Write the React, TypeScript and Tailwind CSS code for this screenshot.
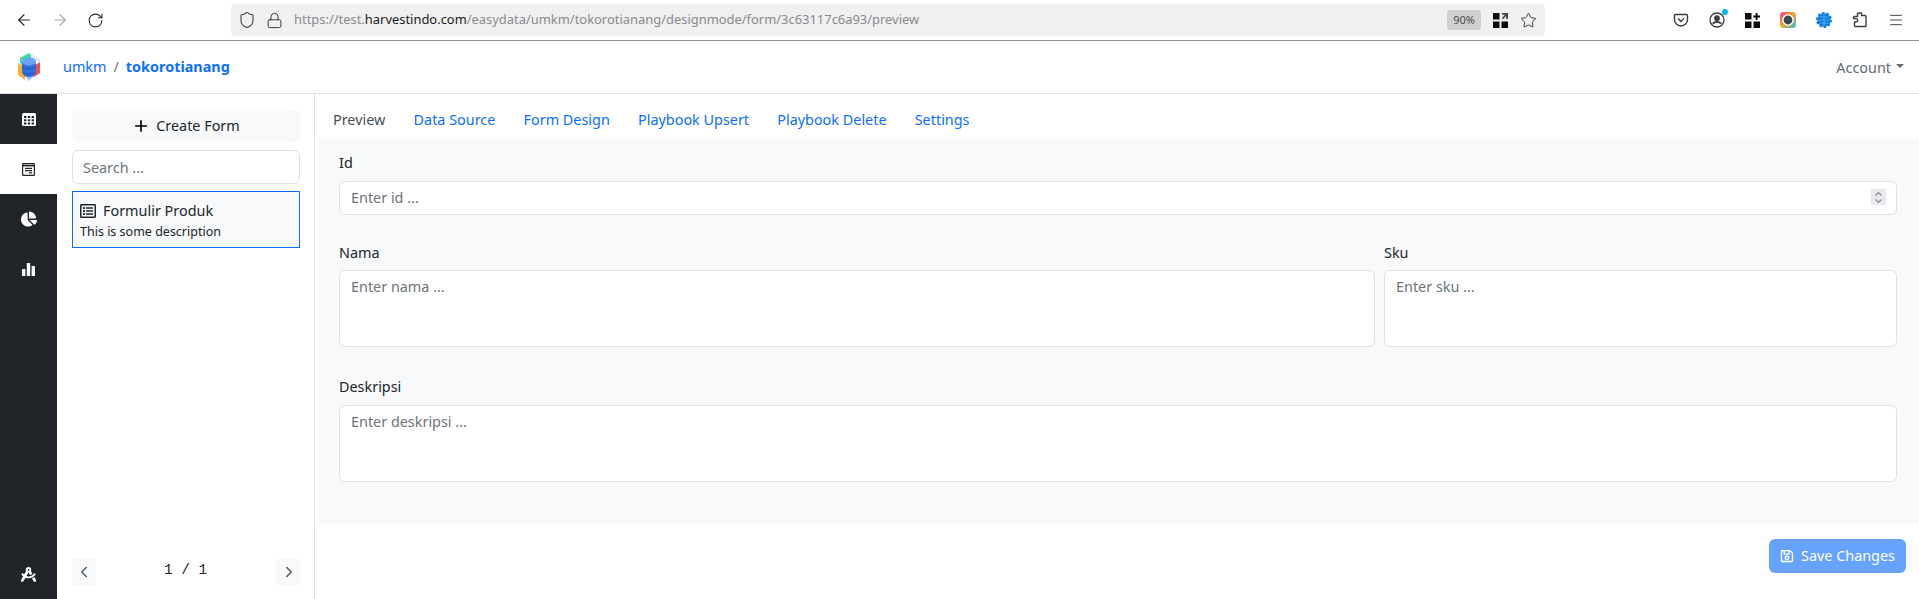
import React from "react";
import { FaChartPie, FaDraftingCompass, FaRegListAlt, FaRegSave } from "react-icons/fa";
import { ArrowLeft, ArrowRight, RotateCw, Shield, Lock, Star, Menu, Plus, ChevronLeft, ChevronRight } from "lucide-react";

const F = "font-['Noto_Sans',sans-serif]";

function Logo() {
  return (
    <svg width="26" height="30" viewBox="0 0 26 30">
      <polygon points="4,6 13,1 15,3 15,8 6,13 4,11" fill="#3ddc97" />
      <polygon points="15,2 24,7 24,11 15,6" fill="#dfe7f5" />
      <polygon points="18,14 24,10 24,21 18,25" fill="#ef5350" />
      <polygon points="2,11 9,15 9,28 2,23" fill="#f9b233" />
      <polygon points="9,24 18,24 13,29" fill="#a9c4ef" />
      <rect x="6" y="6" width="14" height="19" rx="6" fill="#2f6fe0" />
      <ellipse cx="13" cy="9.5" rx="7" ry="4" fill="#6ea2f5" />
      <path d="M6 15c2 2.6 12 2.6 14 0M6 20c2 2.6 12 2.6 14 0" stroke="#1f56b8" strokeWidth="1" fill="none" />
    </svg>
  );
}

function QrAdd({ arrow }: { arrow?: boolean }) {
  return (
    <svg width="15" height="15" viewBox="0 0 15 15" fill="#0c0c0d">
      <rect x="0" y="0" width="6.5" height="6.5" />
      <rect x="0" y="8.5" width="6.5" height="6.5" />
      <rect x="8.5" y="8.5" width="6.5" height="6.5" />
      {arrow ? (
        <path d="M9 0h6v6h-1.8V3L10 6.2 8.8 5 12 1.8H9z" fill="#444" />
      ) : (
        <path d="M10.7 0h1.8v2.6H15v1.8h-2.5V7h-1.8V4.4H8.3V2.6h2.4z" />
      )}
    </svg>
  );
}

function Browser() {
  return (
    <div className="flex h-[41px] shrink-0 items-center border-b border-[#8f8f8f] bg-white">
      <div className="flex w-[231px] shrink-0 items-center gap-[18px] pl-[15px] text-[#2b2a33]">
        <ArrowLeft size={18} strokeWidth={1.5} />
        <ArrowRight size={18} strokeWidth={1.5} className="text-[#a9a9ad]" />
        <RotateCw size={17} strokeWidth={1.5} />
      </div>
      <div className="flex h-8 w-[1314px] shrink-0 items-center rounded-[4px] bg-[#f0f0f0] pl-[7px] pr-[7px]">
        <Shield size={18} strokeWidth={1.4} className="text-[#3c3c44]" />
        <Lock size={17} strokeWidth={1.4} className="ml-[10px] text-[#3c3c44]" />
        <span className={`ml-[11px] flex-1 truncate text-[12.93px] text-[#8a8a8f] ${F}`}>
          https://test.<span className="text-[#1c1b22]">harvestindo.com</span>/easydata/umkm/tokorotianang/designmode/form/3c63117c6a93/preview
        </span>
        <span className={`flex h-5 w-[34px] items-center justify-center rounded-[3px] bg-[#d0d0d0] text-[11px] text-[#4a4a50] ${F}`}>90%</span>
        <span className="ml-[12px] flex"><QrAdd arrow /></span>
        <Star size={17} strokeWidth={1.4} className="ml-[12px] mr-[1px] text-[#3c3c44]" />
      </div>
      <div className="flex flex-1 items-center gap-[20px] pl-[128px] text-[#2b2a33]">
        <svg width="16" height="16" viewBox="0 0 16 16" fill="none" stroke="#3c3c44" strokeWidth="1.4"><path d="M2.5 2.5h11a1 1 0 0 1 1 1v4a6.5 6.5 0 0 1-13 0v-4a1 1 0 0 1 1-1z" /><path d="M5 6.5l3 3 3-3" /></svg>
        <span className="relative flex">
          <svg width="16" height="16" viewBox="0 0 16 16" fill="none" stroke="#3c3c44" strokeWidth="1.3"><circle cx="8" cy="8" r="7" /><circle cx="8" cy="6.2" r="2.2" fill="#3c3c44" /><path d="M3.8 11.6c1.8-2 6.6-2 8.4 0" strokeWidth="2" /></svg>
          <span className="absolute right-[-3px] top-[-3px] size-[6px] rounded-full bg-[#00b3f4]" />
        </span>
        <QrAdd />
        <svg width="16" height="16" viewBox="0 0 16 16"><defs><linearGradient id="g" x1="0" y1="0" x2="1" y2="1"><stop offset="0" stopColor="#f0389c" /><stop offset="0.5" stopColor="#f5a623" /><stop offset="1" stopColor="#21c5e8" /></linearGradient></defs><rect width="16" height="16" rx="3.5" fill="url(#g)" /><circle cx="8" cy="8" r="5.8" fill="#fff" /><circle cx="8" cy="8" r="4.4" fill="#37474f" /></svg>
        <svg width="16" height="16" viewBox="0 0 16 16"><circle cx="8" cy="8" r="6.8" fill="#0a7fe0" /><circle cx="8" cy="8" r="7" fill="none" stroke="#0a7fe0" strokeWidth="2" strokeDasharray="2.5 1.9" /><path d="M2 8h12M8 2v12M3.5 5h9M3.5 11h9" stroke="#6fbcf2" strokeWidth="0.7" /></svg>
        <svg width="16" height="16" viewBox="0 0 16 16" fill="none" stroke="#3c3c44" strokeWidth="1.4" strokeLinejoin="round"><path d="M6.5 1.5h3a.5.5 0 0 1 .5.5v2h3.5a1 1 0 0 1 1 1v9.5a.5.5 0 0 1-.5.5H4a1 1 0 0 1-1-1v-3.5h1.5a1.5 1.5 0 0 0 0-3.4H2V6a1 1 0 0 1 1-1h3V2a.5.5 0 0 1 .5-.5z" transform="translate(-0.5 -0.5)" /></svg>
        <Menu size={16} strokeWidth={1.4} className="text-[#3c3c44]" />
      </div>
    </div>
  );
}

function Navbar() {
  return (
    <div className={`flex h-[53px] shrink-0 items-center border-b border-[#dee2e6] bg-white pl-[16px] pr-[15px] text-[14.4px] ${F}`}>
      <Logo />
      <span className="ml-[21px] text-[#0d6efd]">umkm</span>
      <span className="ml-[7px] text-[#6c757d]">/</span>
      <span className="ml-[7px] font-bold text-[#0d6efd]">tokorotianang</span>
      <span className="ml-auto flex items-center pt-[1px] text-[#666b70]">
        Account
        <span className="ml-[5px] mt-[-2px] border-x-[4px] border-t-[4px] border-x-transparent border-t-[#666b70]" />
      </span>
    </div>
  );
}

function SideIcon({ active, grow, children }: { active?: boolean; grow?: boolean; children: React.ReactNode }) {
  return (
    <div className={`flex h-[50px] items-center justify-center ${active ? "bg-white text-[#212529]" : "text-white"} ${grow ? "mt-auto" : ""}`}>
      {children}
    </div>
  );
}

function Sidebar() {
  return (
    <div className="flex w-[57px] shrink-0 flex-col bg-[#212529]">
      <SideIcon>
        <svg width="14" height="13" viewBox="0 0 14 13" fill="#fff">
          <rect width="14" height="13" rx="1.5" />
          <path d="M2 3h2.4v2H2zM5.8 3h2.4v2H5.8zM9.6 3H12v2H9.6zM2 6.2h2.4v2H2zM5.8 6.2h2.4v2H5.8zM9.6 6.2H12v2H9.6zM2 9.4h2.4v2H2zM5.8 9.4h2.4v2H5.8zM9.6 9.4H12v2H9.6z" fill="#212529" />
        </svg>
      </SideIcon>
      <SideIcon active>
        <svg width="13" height="13" viewBox="0 0 13 13" fill="none" stroke="#212529" strokeWidth="1.2">
          <rect x="0.6" y="0.6" width="11.8" height="11.8" rx="0.6" />
          <path d="M0.6 2.6h11.8" strokeWidth="1.6" />
          <path d="M3 5.3h7M3 7.6h7M7 9.9h3" />
        </svg>
      </SideIcon>
      <SideIcon><FaChartPie size={16} /></SideIcon>
      <SideIcon>
        <svg width="13" height="13" viewBox="0 0 13 13" fill="#fff">
          <rect x="0" y="6" width="3.4" height="7" rx="0.6" />
          <rect x="4.8" y="0" width="3.4" height="13" rx="0.6" />
          <rect x="9.6" y="3" width="3.4" height="10" rx="0.6" />
        </svg>
      </SideIcon>
      <SideIcon grow><span className="flex pt-[1px]"><FaDraftingCompass size={15} /></span></SideIcon>
    </div>
  );
}

function ListPanel() {
  return (
    <div className={`flex w-[258px] shrink-0 flex-col border-r border-[#dee2e6] bg-white pb-[13px] pl-[15px] pr-[14px] pt-[15px] text-[14.4px] ${F}`}>
      <div className="flex h-[34px] w-full items-center justify-center gap-[6px] rounded-[6px] bg-[#f8f9fa] text-[#212529]">
        <Plus size={18} strokeWidth={2.2} className="text-black" />
        Create Form
      </div>
      <div className="mt-[7px] flex h-[34px] items-center rounded-[6px] border border-[#dee2e6] bg-white px-[10px] pt-[1px] text-[#6c757d]">
        Search ...
      </div>
      <div className="mt-[7px] h-[57px] border border-[#0d6efd] bg-[#f8f9fa] pl-[7px] pt-[9px] text-[#212529]">
        <div className="flex h-[20px] items-center gap-[7px]">
          <FaRegListAlt size={16} />
          <span>Formulir Produk</span>
        </div>
        <div className="mt-[1px] text-[12.5px] leading-[20px]">This is some description</div>
      </div>
      <div className="mt-auto flex items-center justify-between">
        <span className="flex h-7 w-6 items-center justify-center rounded-[4px] bg-[#f8f9fa] text-[#555b61]"><ChevronLeft size={18} strokeWidth={2} /></span>
        <span className="pb-[3px] pr-[1px] font-['Liberation_Mono',monospace] text-[14.4px] text-[#212529]">1 / 1</span>
        <span className="flex h-7 w-6 items-center justify-center rounded-[4px] bg-[#f8f9fa] pl-[2px] text-[#555b61]"><ChevronRight size={18} strokeWidth={2} /></span>
      </div>
    </div>
  );
}

function Field({ label, placeholder, className, tall }: { label: string; placeholder: string; className?: string; tall?: boolean }) {
  return (
    <div className={className}>
      <div className={`${tall ? "h-[20px]" : "h-[19px]"} text-[14.4px] leading-[19px] text-[#212529]`}>{label}</div>
      <textarea
        readOnly
        placeholder={placeholder}
        className="mt-[8px] block h-[77px] w-full resize-none rounded-[6px] border border-[#dee2e6] bg-white px-[11px] py-[5px] text-[14.4px] leading-[21px] outline-none placeholder:text-[#6c757d]"
      />
    </div>
  );
}

function Main() {
  const tabs = ["Data Source", "Form Design", "Playbook Upsert", "Playbook Delete", "Settings"];
  return (
    <div className={`flex min-w-0 flex-1 flex-col bg-white pl-[4px] ${F}`}>
      <div className="flex h-[43px] shrink-0 items-start gap-[28.2px] pl-[14px] pt-[15px] text-[14.4px]">
        <span className="text-[#495057]">Preview</span>
        {tabs.map((t) => (
          <span key={t} className="text-[#0d6efd]">{t}</span>
        ))}
      </div>
      <div className="flex h-[387px] shrink-0 flex-col bg-[#f8f9fa] pl-[20px] pr-[22px] pt-[16px]">
        <div className="h-[19px] text-[14.4px] leading-[19px] text-[#212529]">Id</div>
        <div className="relative mt-[9px]">
          <input
            readOnly
            placeholder="Enter id ..."
            className="block h-[34px] w-full rounded-[6px] border border-[#dee2e6] bg-white px-[11px] pb-[1px] text-[14.4px] outline-none placeholder:text-[#6c757d]"
          />
          <span className="absolute right-[11px] top-[8px] flex h-4 w-[15px] items-center justify-center bg-[#e9e9ed]">
            <svg width="9" height="13" viewBox="0 0 9 13" fill="none" stroke="#8a8a92" strokeWidth="1.2"><path d="M1.5 4.5 4.5 1.5l3 3M1.5 8.5l3 3 3-3" /></svg>
          </span>
        </div>
        <div className="mt-[28px] flex gap-[9px]">
          <Field label="Nama" placeholder="Enter nama ..." className="w-[1036px] shrink-0" />
          <Field label="Sku" placeholder="Enter sku ..." className="min-w-0 flex-1" />
        </div>
        <Field label="Deskripsi" placeholder="Enter deskripsi ..." className="mt-[30px]" tall />
      </div>
      <div className="flex flex-1 items-start justify-end pr-[13px] pt-[15px]">
        <div className="flex h-[34px] w-[137px] items-center justify-center gap-[7px] rounded-[6px] bg-[#65a3ff] text-[14.4px] text-white">
          <FaRegSave size={14} />
          Save Changes
        </div>
      </div>
    </div>
  );
}

export default function App() {
  return (
    <div className={`flex h-[599px] w-full flex-col overflow-hidden bg-white ${F}`}>
      <Browser />
      <Navbar />
      <div className="flex min-h-0 flex-1">
        <Sidebar />
        <ListPanel />
        <Main />
      </div>
    </div>
  );
}
